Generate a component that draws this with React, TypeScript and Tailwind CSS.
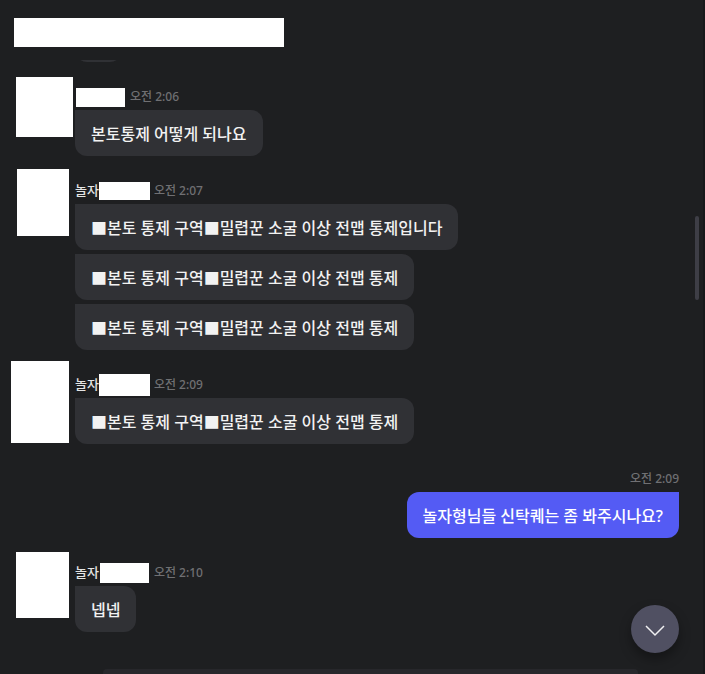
import { clsx } from 'clsx';

type MessageGroup = {
  id: string;
  name: string;
  time: string;
  own?: boolean;
  avatarClass?: string;
  maskClass?: string;
  messages: string[];
};

const groups: MessageGroup[] = [
  {
    id: 'g1',
    name: '',
    time: '오전 2:06',
    avatarClass: 'ml-4 mt-[5px] h-[60px] w-[57px]',
    maskClass: 'ml-px mr-[5px] h-[19px] w-[49px]',
    messages: ['본토통제 어떻게 되나요'],
  },
  {
    id: 'g2',
    name: '놀자',
    time: '오전 2:07',
    avatarClass: 'ml-[17px] mt-[3px] h-[67px] w-[52px]',
    maskClass: 'mr-1 h-[18px] w-[51px]',
    messages: [
      '■본토 통제 구역■밀렵꾼 소굴 이상 전맵 통제입니다',
      '■본토 통제 구역■밀렵꾼 소굴 이상 전맵 통제',
      '■본토 통제 구역■밀렵꾼 소굴 이상 전맵 통제',
    ],
  },
  {
    id: 'g3',
    name: '놀자',
    time: '오전 2:09',
    avatarClass: 'ml-[11px] mt-px h-[82px] w-[58px]',
    maskClass: 'mr-1 h-[22px] w-[51px]',
    messages: ['■본토 통제 구역■밀렵꾼 소굴 이상 전맵 통제'],
  },
  {
    id: 'g4',
    name: '',
    time: '오전 2:09',
    own: true,
    messages: ['놀자형님들 신탁퀘는 좀 봐주시나요?'],
  },
  {
    id: 'g5',
    name: '놀자',
    time: '오전 2:10',
    avatarClass: 'ml-4 mt-1 h-[66px] w-[53px]',
    maskClass: 'ml-px mr-[5px] h-5 w-[49px]',
    messages: ['넵넵'],
  },
];

const Bubble = ({ text, own }: { text: string; own?: boolean }) => (
  <p
    className={clsx(
      'rounded-xl px-4 pt-3 pb-2.5 text-base leading-6 font-medium',
      own ? 'rounded-tr-none bg-[#545bf4] text-white' : 'rounded-tl-none bg-[#303135] text-[#f2f2f2]'
    )}
  >
    {text}
  </p>
);

const Group = ({ group }: { group: MessageGroup }) => (
  <li className={clsx('flex', group.own && 'justify-end pr-6')}>
    {!group.own && (
      <div className="w-[75px] shrink-0">
        <div className={clsx('bg-white', group.avatarClass)} />
      </div>
    )}
    <div className={clsx('flex min-w-0 flex-col', group.own ? 'items-end' : 'items-start')}>
      <div className="mt-[13px] mb-px flex h-6 items-center">
        {group.name && <span className="text-[13px] font-medium text-[#e4e4e4]">{group.name}</span>}
        {!group.own && <span className={clsx('bg-white', group.maskClass)} />}
        <time className="text-xs font-medium text-[#707073]">{group.time}</time>
      </div>
      <div className={clsx('flex flex-col gap-1', group.own ? 'items-end' : 'items-start')}>
        {group.messages.map((text, index) => (
          <Bubble key={index} text={text} own={group.own} />
        ))}
      </div>
    </div>
  </li>
);

export default function App() {
  return (
    <div className="relative flex min-h-screen flex-col overflow-hidden border-r-2 border-[#18191b] bg-[#1e1f21] font-['Noto_Sans','Noto_Sans_CJK_KR',sans-serif]">
      <header className="h-[60px] px-3.5 pt-[18px]">
        <div className="h-[29px] w-[270px] bg-white" />
      </header>

      <main className="flex-1 overflow-hidden pb-9">
        {/* tail of the message scrolled under the header */}
        <div className="-mt-11 flex pl-[75px] [clip-path:inset(44px_0_0_0)]">
          <div className="h-[46px] w-[47px] rounded-xl bg-[#303135]" />
        </div>
        <ul className="mt-2.5 flex flex-col gap-2.5">
          {groups.map((group) => (
            <Group key={group.id} group={group} />
          ))}
        </ul>
      </main>

      <footer className="pr-[65px] pl-[103px]">
        <div className="h-[5px] rounded-t bg-[#27272b]" />
      </footer>

      <div className="absolute top-[216px] right-1 h-[84px] w-1 rounded-full bg-[#3e3e46]" />

      <button
        type="button"
        aria-label="맨 아래로"
        className="absolute right-6 bottom-[21px] flex size-12 items-center justify-center rounded-full bg-[#505062] shadow-[0_6px_12px_rgba(0,0,0,0.35)]"
      >
        <svg width="24" height="24" viewBox="0 0 24 24" fill="none" stroke="#f0f0f2" strokeWidth="1.5">
          <path d="M3 9l9 9 9-9" />
        </svg>
      </button>
    </div>
  );
}
